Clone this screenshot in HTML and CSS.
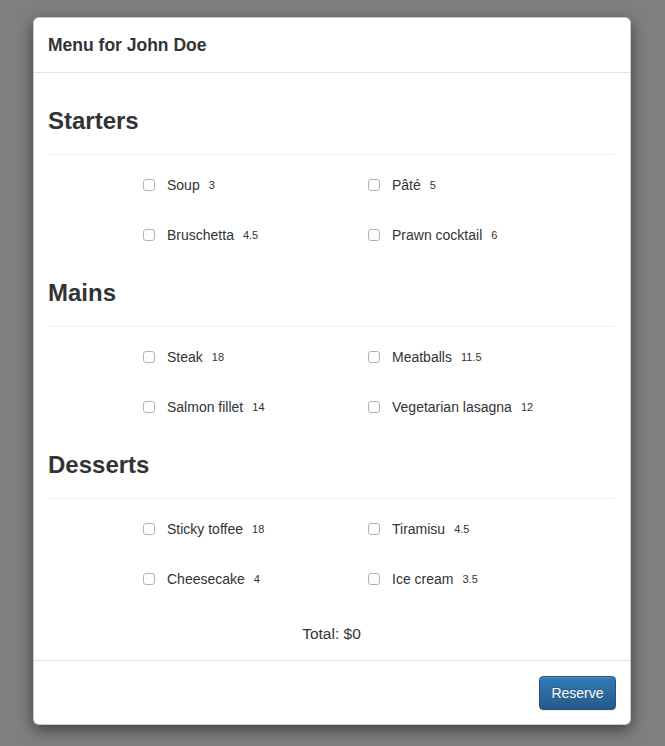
FILE: index.html
```html
<!DOCTYPE html>
<html>
<head>
<meta charset="utf-8">
<link rel="stylesheet" href="styles.css">
</head>
<body>
<div class="backdrop">
  <div class="modal">
    <div class="modal-header">
      <h4 class="modal-title">Menu for John Doe</h4>
    </div>
    <div class="modal-body">
      <h3 class="section-title">Starters</h3>
      <hr class="divider">
      <div class="items">
        <label class="item"><input type="checkbox" class="cb"><span class="name">Soup</span><small class="price">3</small></label>
        <label class="item"><input type="checkbox" class="cb"><span class="name">Pâté</span><small class="price">5</small></label>
        <label class="item"><input type="checkbox" class="cb"><span class="name">Bruschetta</span><small class="price">4.5</small></label>
        <label class="item"><input type="checkbox" class="cb"><span class="name">Prawn cocktail</span><small class="price">6</small></label>
      </div>
      <h3 class="section-title">Mains</h3>
      <hr class="divider">
      <div class="items">
        <label class="item"><input type="checkbox" class="cb"><span class="name">Steak</span><small class="price">18</small></label>
        <label class="item"><input type="checkbox" class="cb"><span class="name">Meatballs</span><small class="price">11.5</small></label>
        <label class="item"><input type="checkbox" class="cb"><span class="name">Salmon fillet</span><small class="price">14</small></label>
        <label class="item"><input type="checkbox" class="cb"><span class="name">Vegetarian lasagna</span><small class="price">12</small></label>
      </div>
      <h3 class="section-title">Desserts</h3>
      <hr class="divider">
      <div class="items">
        <label class="item"><input type="checkbox" class="cb"><span class="name">Sticky toffee</span><small class="price">18</small></label>
        <label class="item"><input type="checkbox" class="cb"><span class="name">Tiramisu</span><small class="price">4.5</small></label>
        <label class="item"><input type="checkbox" class="cb"><span class="name">Cheesecake</span><small class="price">4</small></label>
        <label class="item"><input type="checkbox" class="cb"><span class="name">Ice cream</span><small class="price">3.5</small></label>
      </div>
      <p class="total">Total: $0</p>
    </div>
    <div class="modal-footer">
      <button class="btn-primary" type="button">Reserve</button>
    </div>
  </div>
</div>
</body>
</html>
```
FILE: styles.css
```css
html, body {
  margin: 0;
  padding: 0;
}
body {
  background: #7f7f7f;
  font-family: "Liberation Sans", Arial, sans-serif;
  font-size: 14px;
  line-height: 20px;
  color: #333;
}
.backdrop {
  width: 665px;
  height: 746px;
  padding-top: 17px;
  box-sizing: border-box;
}
.modal {
  width: 598px;
  margin: 0 0 0 33px;
  background: #fff;
  border: 1px solid rgba(0,0,0,0.2);
  border-radius: 6px;
  box-shadow: 0 5px 15px rgba(0,0,0,0.5);
  box-sizing: border-box;
}
.modal-header {
  padding: 15px 15px 14px 14px;
  border-bottom: 1px solid #e5e5e5;
}
.modal-title {
  margin: 0;
  font-size: 17.5px;
  line-height: 25px;
  font-weight: 600;
}
.modal-body {
  padding: 15px 15px 16px 14px;
}
.section-title {
  margin: 20px 0 0;
  font-size: 24px;
  line-height: 26px;
  font-weight: 600;
}
.divider {
  margin: 20px 0;
  border: 0;
  border-top: 1px solid #eee;
  height: 0;
}
.items {
  display: grid;
  grid-template-columns: 225px 225px;
  row-gap: 30px;
  padding-left: 95px;
  margin-bottom: 35px;
}
.item {
  display: flex;
  align-items: center;
  height: 20px;
}
.cb {
  appearance: none;
  -webkit-appearance: none;
  width: 12px;
  height: 12px;
  margin: 0 12px 0 0;
  border: 1px solid #b3b3b3;
  border-radius: 3px;
  background: #fff;
  box-sizing: border-box;
  flex: none;
}
.name {
  font-size: 14px;
}
.price {
  font-size: 11px;
  margin-left: 9px;
}
.total {
  margin: 35px 0 0;
  text-align: center;
  font-size: 15.5px;
  line-height: 20px;
}
.modal-footer {
  padding: 15px 14px 14px 15px;
  border-top: 1px solid #e5e5e5;
  display: flex;
  justify-content: flex-end;
}
.btn-primary {
  height: 34px;
  width: 77px;
  padding: 0;
  font-family: "Liberation Sans", Arial, sans-serif;
  font-size: 14px;
  color: #fff;
  text-shadow: 0 -1px 0 rgba(0,0,0,0.2);
  background: linear-gradient(to bottom, #337ab7 0, #265a88 100%);
  border: 1px solid #245580;
  border-radius: 4px;
  box-shadow: inset 0 1px 0 rgba(255,255,255,0.15), 0 1px 1px rgba(0,0,0,0.075);
}
```
